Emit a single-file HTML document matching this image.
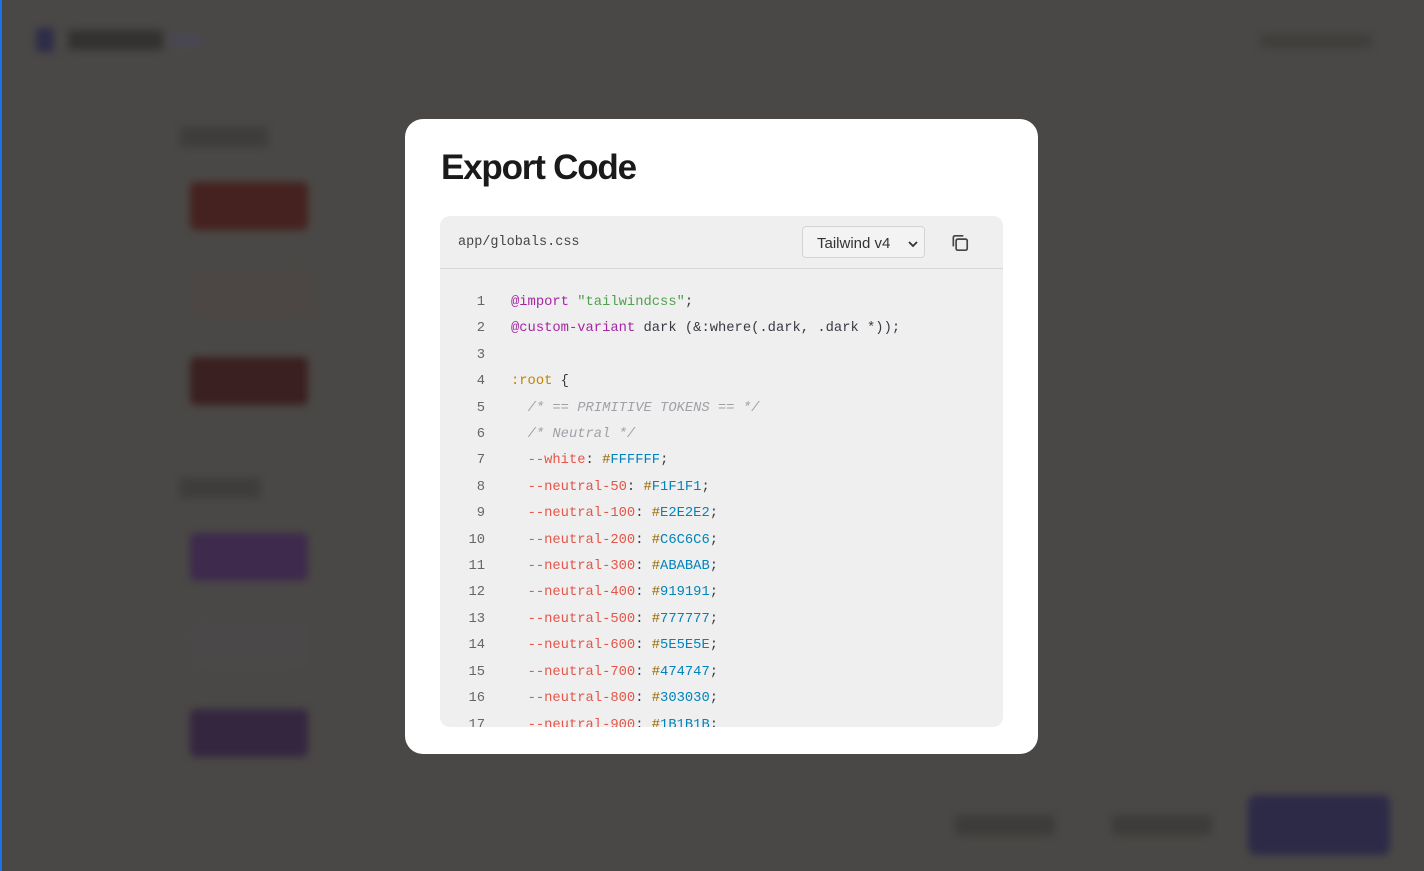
<!DOCTYPE html>
<html><head><meta charset="utf-8"><style>
*{margin:0;padding:0;box-sizing:border-box}
body{width:1424px;height:871px;overflow:hidden;background:#4a4846;font-family:"Liberation Sans",sans-serif;position:relative}
.bl{position:absolute;left:0;top:0;width:2px;height:871px;background:#1a73e8}
.bg{position:absolute;inset:0;filter:blur(4px)}
.bg div{position:absolute}
.modal{position:absolute;left:405px;top:119px;width:633px;height:635px;background:#fff;border-radius:18px}
h1{position:absolute;left:36px;top:29px;font-size:35px;font-weight:700;color:#1a1a1a;letter-spacing:-1.2px}
.box{position:absolute;left:35px;top:97px;width:563px;height:511px;background:#efefef;border-radius:10px;overflow:hidden}
.hd{height:53px;border-bottom:1px solid #d6d6d6;position:relative}
.fn{position:absolute;left:18px;top:19px;font-family:"Liberation Mono",monospace;font-size:13.5px;color:#444}
.sel{position:absolute;left:362px;top:10px;width:123px;height:32px;border:1px solid #d4d4d4;border-radius:4px;background:#f3f3f3;font-size:15px;color:#333;padding:8px 0 0 14px}
.sel svg{position:absolute;right:6px;top:13px}
.cp{position:absolute;left:510px;top:17px}
.code{position:absolute;left:0;top:74px;font-family:"Liberation Mono",monospace;font-size:13.8px;line-height:26.4px;white-space:pre;color:#383a42}
.ln{display:inline-block;width:45px;text-align:right;color:#666;margin-right:26px}
.p{color:#a626a4}.g{color:#50a14f}.y{color:#c18401}.c{color:#a0a1a7;font-style:italic}.r{color:#e45649}.h{color:#986801}.b{color:#0184bc}
</style></head><body>
<div class="bg">
<div style="left:36px;top:28px;width:18px;height:24px;background:#2e2d4a;border-radius:3px"></div>
<div style="left:68px;top:30px;width:95px;height:20px;background:#333231;border-radius:2px"></div>
<div style="left:170px;top:37px;width:32px;height:8px;background:#48475a"></div>
<div style="left:1260px;top:34px;width:112px;height:14px;background:#403f3d"></div>
<div style="left:180px;top:127px;width:88px;height:20px;background:#3e3d3c"></div>
<div style="left:190px;top:182px;width:118px;height:48px;background:#452220;border-radius:6px"></div>
<div style="left:190px;top:270px;width:118px;height:46px;background:#4c4745;border-radius:6px"></div>
<div style="left:190px;top:357px;width:118px;height:48px;background:#3a2020;border-radius:6px"></div>
<div style="left:180px;top:478px;width:80px;height:20px;background:#3e3d3c"></div>
<div style="left:190px;top:533px;width:118px;height:48px;background:#3e2a4c;border-radius:6px"></div>
<div style="left:190px;top:622px;width:118px;height:46px;background:#4b4849;border-radius:6px"></div>
<div style="left:190px;top:709px;width:118px;height:48px;background:#352640;border-radius:6px"></div>
<div style="left:955px;top:815px;width:100px;height:20px;background:#3d3c3a;border-radius:4px"></div>
<div style="left:1112px;top:815px;width:100px;height:20px;background:#3d3c3a;border-radius:4px"></div>
<div style="left:1248px;top:795px;width:142px;height:60px;background:#2d2a48;border-radius:8px"></div>
</div>
<div class="bl"></div>
<div class="modal">
<h1>Export Code</h1>
<div class="box">
<div class="hd"><div class="fn">app/globals.css</div>
<div class="sel">Tailwind v4<svg width="10" height="8" viewBox="0 0 10 8"><path d="M1 2l4 4 4-4" stroke="#333" stroke-width="1.8" fill="none"/></svg></div>
<svg class="cp" width="20" height="20" viewBox="0 0 18 18" fill="none" stroke="#444" stroke-width="1.5"><rect x="5.5" y="5.5" width="10" height="10" rx="1.5"/><path d="M3 12V4a1.5 1.5 0 0 1 1.5-1.5H12"/></svg>
</div>
<div class="code"><span class="ln">1</span><span class="p">@import</span> <span class="g">"tailwindcss"</span>;
<span class="ln">2</span><span class="p">@custom-variant</span> dark (&amp;:where(.dark, .dark *));
<span class="ln">3</span>
<span class="ln">4</span><span class="y">:root</span> {
<span class="ln">5</span>  <span class="c">/* == PRIMITIVE TOKENS == */</span>
<span class="ln">6</span>  <span class="c">/* Neutral */</span>
<span class="ln">7</span>  <span class="r">--white</span>: <span class="h">#</span><span class="b">FFFFFF</span>;
<span class="ln">8</span>  <span class="r">--neutral-50</span>: <span class="h">#</span><span class="b">F1F1F1</span>;
<span class="ln">9</span>  <span class="r">--neutral-100</span>: <span class="h">#</span><span class="b">E2E2E2</span>;
<span class="ln">10</span>  <span class="r">--neutral-200</span>: <span class="h">#</span><span class="b">C6C6C6</span>;
<span class="ln">11</span>  <span class="r">--neutral-300</span>: <span class="h">#</span><span class="b">ABABAB</span>;
<span class="ln">12</span>  <span class="r">--neutral-400</span>: <span class="h">#</span><span class="b">919191</span>;
<span class="ln">13</span>  <span class="r">--neutral-500</span>: <span class="h">#</span><span class="b">777777</span>;
<span class="ln">14</span>  <span class="r">--neutral-600</span>: <span class="h">#</span><span class="b">5E5E5E</span>;
<span class="ln">15</span>  <span class="r">--neutral-700</span>: <span class="h">#</span><span class="b">474747</span>;
<span class="ln">16</span>  <span class="r">--neutral-800</span>: <span class="h">#</span><span class="b">303030</span>;
<span class="ln">17</span>  <span class="r">--neutral-900</span>: <span class="h">#</span><span class="b">1B1B1B</span>;
</div>
</div>
</div>
</body></html>
